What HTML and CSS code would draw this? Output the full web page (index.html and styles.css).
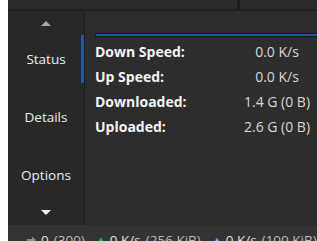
FILE: index.html
```html
<!DOCTYPE html>
<html lang="en">
<head>
    <meta charset="UTF-8">
    <title>Torrent Details</title>
    <link rel="stylesheet" href="styles.css">
</head>
<body>
    <div class="app">
        <div class="topbar">
            <div class="tab"></div>
            <div class="tab-sep"></div>
            <div class="tab"></div>
        </div>

        <div class="main">
            <div class="nav">
                <div class="nav-arrow">
                    <svg width="10" height="5" viewBox="0 0 10 5"><path d="M0 5 L5 0 L10 5 Z" fill="#a6a6a6"/></svg>
                </div>
                <div class="nav-item active">Status</div>
                <div class="nav-item">Details</div>
                <div class="nav-item">Options</div>
                <div class="nav-arrow down">
                    <svg width="10" height="5" viewBox="0 0 10 5"><path d="M0 0 L10 0 L5 5 Z" fill="#f0f0f0"/></svg>
                </div>
            </div>
            <div class="nav-divider"></div>

            <div class="content">
                <div class="progress"></div>
                <div class="stats">
                    <div class="label">Down Speed:</div><div class="value">0.0 K/s</div>
                    <div class="label">Up Speed:</div><div class="value">0.0 K/s</div>
                    <div class="label">Downloaded:</div><div class="value">1.4 G (0 B)</div>
                    <div class="label">Uploaded:</div><div class="value">2.6 G (0 B)</div>
                </div>
            </div>
        </div>

        <div class="statusbar">
            <span class="sb-item">
                <svg width="9" height="8" viewBox="0 0 9 8"><path d="M0 3 H5 V0.5 L9 4 L5 7.5 V5 H0 Z" fill="#8a8a8a"/></svg>
                0 <span class="dim">(300)</span>
            </span>
            <span class="sb-item">
                <svg width="8" height="7" viewBox="0 0 8 7"><path d="M0 7 L4 0 L8 7 Z" fill="#1fb141"/></svg>
                0 K/s <span class="dim">(256 KiB)</span>
            </span>
            <span class="sb-item">
                <svg width="8" height="7" viewBox="0 0 8 7"><path d="M0.5 6.5 L4 0.8 L7.5 6.5 Z" fill="#8fb4ea" stroke="#2f6fd0" stroke-width="1"/></svg>
                0 K/s <span class="dim">(100 KiB)</span>
            </span>
        </div>
    </div>
</body>
</html>
```

FILE: styles.css
```css
body { margin: 0 0 0 8px; background: #fff; font-family: "Open Sans", "Noto Sans", sans-serif; font-size: 14px; overflow: hidden; }
.app { height: 241px; display: flex; flex-direction: column; background: #2d2d2d; color: #e8e8e8; overflow: hidden; }

.topbar { height: 9px; flex-shrink: 0; display: flex; border-bottom: 2px solid #202020; }
.tab { flex: 1; background: #2b2b2b; }
.tab:first-child { flex: 0 0 229px; }
.tab-sep { width: 3px; background: #1e1e1e; }

.main { height: 214px; flex-shrink: 0; display: flex; }
.nav { width: 76px; background: #282828; display: flex; flex-direction: column; font-size: 13.5px; }
.nav-arrow { height: 24px; display: flex; align-items: center; justify-content: center; }
.nav-arrow.down { height: 26px; }
.nav-item { height: 48px; margin-bottom: 10px; display: flex; align-items: center; justify-content: center; color: #ececec; box-sizing: border-box; }
.nav-item:nth-child(4) { margin-bottom: 0; }
.nav-item.active { border-right: 3px solid #1d5aa6; padding-left: 3px; }
.nav-divider { width: 1px; background: #1c1c1c; }

.content { flex: 1; padding: 22px 0 0 10px; }
.progress { height: 2px; border: 1px solid #141414; border-right: none; border-radius: 2px 0 0 2px; background: #1d5aa6; margin-bottom: 2px; }
.stats { display: grid; grid-template-columns: 142px 80px; grid-auto-rows: 25px; align-items: center; }
.label { font-weight: bold; color: #f4f4f4; }
.value { text-align: center; color: #d8d8d8; }

.statusbar { flex: 1; background: #333333; display: flex; gap: 12px; padding: 6px 0 0 19px; color: #e0e0e0; white-space: nowrap; font-size: 13.5px; }
.sb-item { display: flex; align-items: center; gap: 5px; height: 18px; }
.dim { color: #bdbdbd; }
```
